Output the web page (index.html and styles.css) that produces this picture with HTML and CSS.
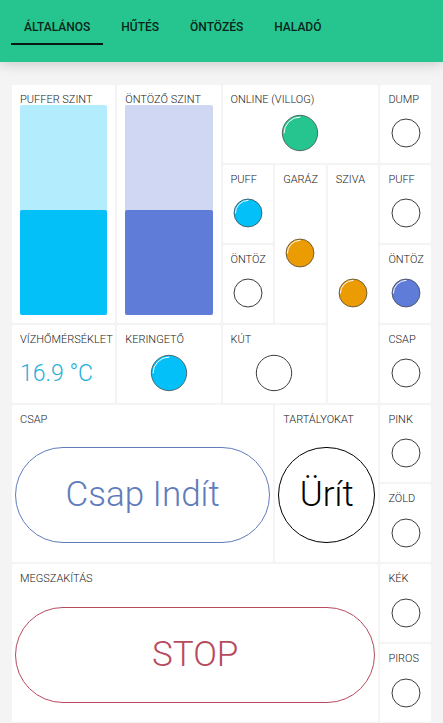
FILE: index.html
```html
<!DOCTYPE html>
<html lang="hu">
<head>
<meta charset="utf-8">
<meta name="viewport" content="width=device-width, initial-scale=1">
<title>Öntözés</title>
<link rel="stylesheet" href="styles.css">
</head>
<body>
<svg width="0" height="0" class="defs" aria-hidden="true">
  <symbol id="led" viewBox="0 0 38 38">
    <circle class="disc" cx="19" cy="19" r="17.7"/>
  </symbol>
  <symbol id="led-on" viewBox="0 0 38 38">
    <circle class="disc lit" cx="19" cy="19" r="17.7"/>
    <path class="shine" d="M3 19A16 16 0 0 1 19 3"/>
  </symbol>
</svg>
<header class="topbar">
  <nav class="tabs">
    <a class="tab active" href="#altalanos">ÁLTALÁNOS</a>
    <a class="tab" href="#hutes">HŰTÉS</a>
    <a class="tab" href="#ontozes">ÖNTÖZÉS</a>
    <a class="tab" href="#halado">HALADÓ</a>
  </nav>
</header>
<main class="board">
  <section class="card w2 h3"><h2 class="label">PUFFER SZINT</h2><div class="tank cyan"><div class="level"></div></div></section>
  <section class="card w2 h3"><h2 class="label">ÖNTÖZŐ SZINT</h2><div class="tank blue"><div class="level"></div></div></section>
  <section class="card w3"><h2 class="label">ONLINE (VILLOG)</h2><div class="slot"><svg class="led large green"><use href="#led-on"/></svg></div></section>
  <section class="card"><h2 class="label">DUMP</h2><div class="slot"><svg class="led"><use href="#led"/></svg></div></section>

  <section class="card"><h2 class="label">PUFF</h2><div class="slot"><svg class="led cyan"><use href="#led-on"/></svg></div></section>
  <section class="card h2"><h2 class="label">GARÁZ</h2><div class="slot"><svg class="led orange"><use href="#led-on"/></svg></div></section>
  <section class="card h3"><h2 class="label">SZIVA</h2><div class="slot"><svg class="led orange"><use href="#led-on"/></svg></div></section>
  <section class="card"><h2 class="label">PUFF</h2><div class="slot"><svg class="led"><use href="#led"/></svg></div></section>

  <section class="card"><h2 class="label">ÖNTÖZ</h2><div class="slot"><svg class="led"><use href="#led"/></svg></div></section>
  <section class="card"><h2 class="label">ÖNTÖZ</h2><div class="slot"><svg class="led blue"><use href="#led-on"/></svg></div></section>

  <section class="card w2"><h2 class="label">VÍZHŐMÉRSÉKLET</h2><p class="value">16.9 °C</p></section>
  <section class="card w2"><h2 class="label">KERINGETŐ</h2><div class="slot"><svg class="led large cyan"><use href="#led-on"/></svg></div></section>
  <section class="card w2"><h2 class="label">KÚT</h2><div class="slot"><svg class="led large"><use href="#led"/></svg></div></section>
  <section class="card"><h2 class="label">CSAP</h2><div class="slot"><svg class="led"><use href="#led"/></svg></div></section>

  <section class="card w5 h2"><h2 class="label">CSAP</h2><div class="action"><button class="pill start" type="button">Csap Indít</button></div></section>
  <section class="card w2 h2"><h2 class="label">TARTÁLYOKAT</h2><div class="action"><button class="pill drain" type="button">Ürít</button></div></section>
  <section class="card"><h2 class="label">PINK</h2><div class="slot"><svg class="led"><use href="#led"/></svg></div></section>
  <section class="card"><h2 class="label">ZÖLD</h2><div class="slot"><svg class="led"><use href="#led"/></svg></div></section>

  <section class="card w7 h2"><h2 class="label">MEGSZAKÍTÁS</h2><div class="action"><button class="pill stop" type="button">STOP</button></div></section>
  <section class="card"><h2 class="label">KÉK</h2><div class="slot"><svg class="led"><use href="#led"/></svg></div></section>
  <section class="card"><h2 class="label">PIROS</h2><div class="slot"><svg class="led"><use href="#led"/></svg></div></section>
</main>
</body>
</html>
```
FILE: styles.css
```css
* { box-sizing: border-box; }

body {
  margin: 0;
  min-height: 100vh;
  display: flex;
  flex-direction: column;
  background: #f4f4f4;
  color: #222;
  font-family: Roboto, "Liberation Sans", sans-serif;
  font-weight: 300;
}

.defs { position: absolute; }

.topbar {
  height: 62px;
  padding: 10px 11px;
  background: #26c58f;
  box-shadow: 0 2px 12px rgba(0, 0, 0, 0.18);
}

.tabs {
  display: flex;
  gap: 5px;
}

.tab {
  padding: 1px 13px 0;
  border-bottom: 2px solid transparent;
  color: #08251b;
  font-size: 12px;
  font-weight: 500;
  line-height: 32px;
  text-decoration: none;
}

.tab.active { border-bottom-color: #08170f; }

.board {
  flex: 1;
  display: grid;
  grid-template-columns: repeat(8, minmax(0, 1fr));
  grid-template-rows: repeat(8, minmax(0, 1fr));
  grid-auto-flow: row dense;
  gap: 2px;
  padding: 23px 12px 1px;
}

.card {
  display: flex;
  flex-direction: column;
  min-width: 0;
  min-height: 0;
  border-radius: 2px;
  background: #fff;
}

.w2 { grid-column: span 2; }
.w3 { grid-column: span 3; }
.w5 { grid-column: span 5; }
.w7 { grid-column: span 7; }
.card.h2 { grid-row: span 2; }
.card.h3 { grid-row: span 3; }

.label {
  margin: 0;
  padding: 8px 0 0 8px;
  height: 20px;
  font-size: 11px;
  font-weight: 300;
  line-height: 14px;
  white-space: nowrap;
}

.slot {
  flex: 1;
  display: flex;
  align-items: center;
  justify-content: center;
  padding-bottom: 1px;
}

.led {
  width: 30px;
  height: 30px;
  color: #fff;
}

.led.large {
  width: 38px;
  height: 38px;
}

.disc {
  fill: currentColor;
  stroke: #3c3c3c;
  stroke-width: 1;
  vector-effect: non-scaling-stroke;
}

.disc.lit { stroke-opacity: 0.7; }

.shine {
  fill: none;
  stroke: #fff;
  stroke-width: 1;
  stroke-linecap: round;
  vector-effect: non-scaling-stroke;
}

.green { color: #26c58f; }
.cyan { color: #04c0f8; }
.blue { color: #5f7cd8; }
.orange { color: #ec9c03; }

.tank {
  flex: 1;
  display: flex;
  flex-direction: column;
  justify-content: flex-end;
  margin: 0 8px 8px;
  border-radius: 2px;
}

.tank.cyan { background: #b3ecfd; }
.tank.blue { background: #d0d7f3; }
.tank.cyan .level { background: #04c0f8; }
.tank.blue .level { background: #5f7cd8; }

.level {
  height: 50%;
  border-radius: 2px;
}

.value {
  margin: 0;
  padding: 15px 0 0 8px;
  color: #1fb0d8;
  font-size: 23px;
  line-height: 28px;
}

.action {
  flex: 1;
  display: flex;
  align-items: center;
  padding: 4px 3px 0;
}

.pill {
  width: 100%;
  height: 96px;
  padding: 0;
  border: 1px solid currentColor;
  border-radius: 48px;
  background: transparent;
  font: 300 35px/40px Roboto, "Liberation Sans", sans-serif;
}

.start { color: #607cbb; }
.drain { color: #000; }
.stop { color: #b84a5e; }
```
